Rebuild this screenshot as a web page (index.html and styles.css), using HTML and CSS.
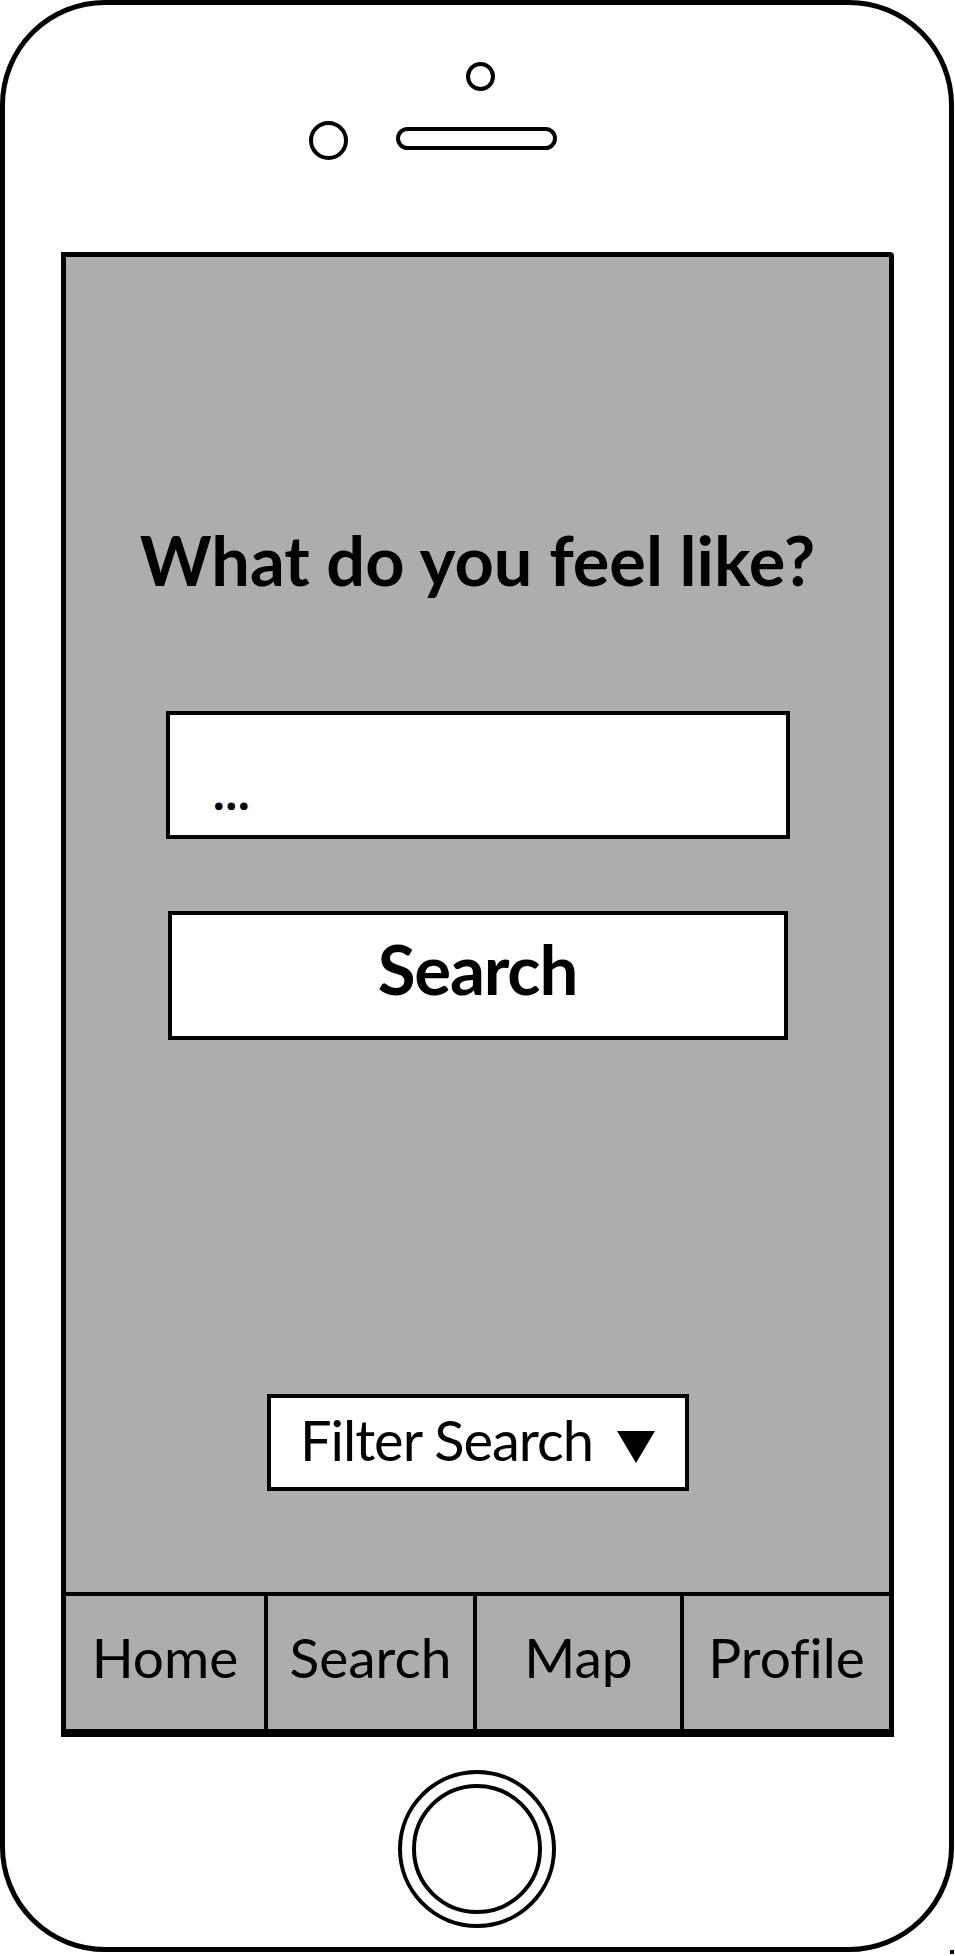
FILE: index.html
```html
<!DOCTYPE html>
<html lang="en">
<head>
<meta charset="utf-8">
<title>What do you feel like?</title>
<link rel="stylesheet" href="styles.css">
</head>
<body>
<div class="phone">
  <div class="phone-top">
    <div class="cam"></div>
    <div class="sensor-row">
      <div class="lens"></div>
      <div class="speaker"></div>
    </div>
  </div>
  <div class="screen">
    <div class="main">
      <h1 class="title">What do you feel like?</h1>
      <div class="input">...</div>
      <div class="btn">Search</div>
      <div class="filter">
        <span class="filter-label">Filter Search</span>
        <svg class="filter-arrow" width="38" height="32" viewBox="0 0 38 32"><polygon points="0,0 38,0 19,32" fill="#000"/></svg>
      </div>
    </div>
    <nav class="tabs">
      <div class="tab">Home</div>
      <div class="tab">Search</div>
      <div class="tab">Map</div>
      <div class="tab">Profile</div>
    </nav>
  </div>
  <div class="home-btn"><div class="home-btn-inner"></div></div>
</div>
<div class="speck"></div>
</body>
</html>
```
FILE: styles.css
```css
html, body {
  margin: 0;
  padding: 0;
  background: #fff;
}
body {
  font-family: Lato, "Open Sans", sans-serif;
  font-variant-ligatures: none;
  color: #000;
}
.phone {
  box-sizing: border-box;
  width: 954px;
  height: 1952px;
  border: 5px solid #000;
  border-radius: 105px;
  background: #fff;
}
.phone-top {
  display: flow-root;
  height: 247px;
}
.cam {
  box-sizing: border-box;
  width: 29px;
  height: 29px;
  margin: 57px 0 0 461px;
  border: 4px solid #000;
  border-radius: 50%;
}
.sensor-row {
  display: flex;
  align-items: flex-start;
  margin: 30px 0 0 304px;
}
.lens {
  box-sizing: border-box;
  width: 39px;
  height: 39px;
  border: 4px solid #000;
  border-radius: 50%;
}
.speaker {
  box-sizing: border-box;
  width: 161px;
  height: 23px;
  margin: 6px 0 0 48px;
  border: 4px solid #000;
  border-radius: 12px;
}
.screen {
  box-sizing: border-box;
  width: 833px;
  height: 1485px;
  margin-left: 56px;
  border-style: solid;
  border-color: #000;
  border-width: 5px 5px 8px 5px;
  border-top-right-radius: 4px;
  background: #adadad;
  display: flex;
  flex-direction: column;
}
.main {
  flex: 1;
  display: flex;
  flex-direction: column;
  align-items: center;
}
.title {
  margin: 269px 0 0;
  font-size: 68.5px;
  line-height: 68px;
  font-weight: 700;
  white-space: nowrap;
}
.input {
  box-sizing: border-box;
  width: 624px;
  height: 128px;
  margin-top: 117px;
  padding: 56px 0 0 43px;
  border: 4px solid #000;
  background: #fff;
  font-family: "Open Sans", sans-serif;
  font-size: 44px;
  line-height: 44px;
  font-weight: 700;
}
.btn {
  box-sizing: border-box;
  width: 620px;
  height: 129px;
  margin-top: 72px;
  padding-top: 19px;
  border: 4px solid #000;
  background: #fff;
  text-align: center;
  font-size: 69px;
  line-height: 70px;
  font-weight: 700;
  letter-spacing: -1.2px;
}
.filter {
  box-sizing: border-box;
  width: 422px;
  height: 97px;
  margin-top: 354px;
  padding-top: 14px;
  border: 4px solid #000;
  background: #fff;
  display: flex;
  justify-content: center;
  align-items: flex-start;
  gap: 24px;
}
.filter-label {
  font-size: 56px;
  line-height: 56px;
  letter-spacing: -1px;
  white-space: nowrap;
}
.filter-arrow {
  display: block;
  margin-top: 19px;
}
.tabs {
  box-sizing: border-box;
  height: 137px;
  border-top: 4px solid #000;
  display: grid;
  grid-template-columns: 198px 209px 207px 209px;
}
.tab {
  box-sizing: border-box;
  padding-top: 34px;
  text-align: center;
  font-size: 55px;
  line-height: 55px;
}
.tab + .tab {
  border-left: 4px solid #000;
}
.home-btn {
  box-sizing: border-box;
  width: 158px;
  height: 158px;
  margin: 33px auto 0;
  padding: 10px;
  border: 4px solid #000;
  border-radius: 50%;
}
.home-btn-inner {
  box-sizing: border-box;
  width: 100%;
  height: 100%;
  border: 4px solid #000;
  border-radius: 50%;
}
.speck {
  position: absolute;
  left: 950px;
  top: 1950px;
  width: 4px;
  height: 4px;
  background: #000;
}
```
